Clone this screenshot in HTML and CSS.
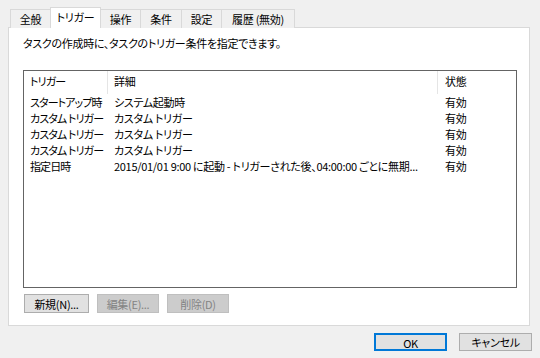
FILE: index.html
```html
<!DOCTYPE html>
<html lang="ja">
<head>
<meta charset="utf-8">
<link rel="stylesheet" href="styles.css">
</head>
<body>
<div class="dialog">
  <div class="tabs">
    <div class="tab t1">全般</div>
    <div class="tab t2 active">トリガー</div>
    <div class="tab t3">操作</div>
    <div class="tab t4">条件</div>
    <div class="tab t5">設定</div>
    <div class="tab t6">履歴 (無効)</div>
  </div>
  <div class="panel">
    <p class="desc">タスクの作成時に、タスクのトリガー条件を指定できます。</p>
    <div class="listbox">
      <div class="row head">
        <div class="c1 hc">トリガー</div>
        <div class="c2 hc">詳細</div>
        <div class="c3">状態</div>
      </div>
      <div class="row">
        <div class="c1">スタートアップ時</div>
        <div class="c2">システム起動時</div>
        <div class="c3">有効</div>
      </div>
      <div class="row">
        <div class="c1">カスタム トリガー</div>
        <div class="c2">カスタム トリガー</div>
        <div class="c3">有効</div>
      </div>
      <div class="row">
        <div class="c1">カスタム トリガー</div>
        <div class="c2">カスタム トリガー</div>
        <div class="c3">有効</div>
      </div>
      <div class="row">
        <div class="c1">カスタム トリガー</div>
        <div class="c2">カスタム トリガー</div>
        <div class="c3">有効</div>
      </div>
      <div class="row">
        <div class="c1">指定日時</div>
        <div class="c2">2015/01/01 9:00 に起動 - トリガーされた後、04:00:00 ごとに無期...</div>
        <div class="c3">有効</div>
      </div>
    </div>
    <div class="actions">
      <button class="btn b-new">新規(N)...</button>
      <button class="btn b-dis">編集(E)...</button>
      <button class="btn b-dis">削除(D)</button>
    </div>
  </div>
  <div class="footer">
    <button class="btn fb ok">OK</button>
    <button class="btn fb">キャンセル</button>
  </div>
</div>
</body>
</html>
```
FILE: styles.css
```css
* { box-sizing: border-box; }
html, body {
  margin: 0;
  padding: 0;
  background: #f0f0f0;
  width: 540px;
  height: 358px;
  overflow: hidden;
}
body {
  font-family: "Noto Sans CJK JP", "Noto Sans", sans-serif;
  font-size: 11px;
  letter-spacing: -0.3px;
  color: #000;
  font-feature-settings: "palt";
}
.dialog {
  display: flex;
  flex-direction: column;
  width: 540px;
  height: 358px;
}
.tabs {
  display: flex;
  align-items: flex-end;
  height: 28px;
  padding-left: 10px;
  position: relative;
  z-index: 2;
}
.tab {
  height: 19px;
  border: 1px solid #d9d9d9;
  border-bottom: none;
  background: #f0f0f0;
  display: flex;
  align-items: center;
  justify-content: center;
  line-height: 16px;
  margin-right: -1px;
}
.tab.active {
  height: 21px;
  background: #fff;
  padding-bottom: 2px;
}
.t1 { width: 41px; }
.t2 { width: 51px; }
.t3 { width: 41px; }
.t4 { width: 42px; }
.t5 { width: 41px; }
.t6 { width: 74px; }
.panel {
  margin: -1px 10px 0 8px;
  height: 299px;
  background: #fff;
  border: 1px solid #d9d9d9;
  padding: 7px 12px 0 14px;
  display: flex;
  flex-direction: column;
}
.desc {
  margin: 0;
  line-height: 16px;
  height: 16px;
}
.listbox {
  margin-top: 19px;
  width: 494px;
  height: 218px;
  border: 1px solid #646464;
  background: #fff;
  overflow: hidden;
}
.row {
  display: grid;
  grid-template-columns: 84px 330px 1fr;
  height: 16px;
  line-height: 16px;
  white-space: nowrap;
}
.row.head {
  height: 23px;
  line-height: 20px;
}
.hc { border-right: 1px solid #e5e5e5; }
.c1 {
  padding-left: 6px;
  min-width: 0;
  letter-spacing: -0.9px;
}
.c2 { padding-left: 6px; overflow: hidden; text-overflow: ellipsis; min-width: 0; padding-right: 4px; }
.c3 { padding-left: 7px; }
.actions {
  display: flex;
  gap: 8px;
  margin-top: 6px;
  padding-left: 1px;
}
.btn {
  font: inherit;
  letter-spacing: inherit;
  font-feature-settings: "palt";
  height: 19px;
  padding: 0;
  line-height: 16px;
  border: 1px solid #adadad;
  background: #e1e1e1;
  color: #000;
}
.b-new { width: 65px; }
.b-dis {
  width: 62px;
  background: #cccccc;
  border-color: #bfbfbf;
  color: #838383;
}
.footer {
  display: flex;
  justify-content: flex-end;
  gap: 12px;
  padding: 7px 8px 0 0;
}
.fb {
  width: 73px;
  height: 18px;
}
.ok {
  border: 2px solid #0078d7;
}
```
